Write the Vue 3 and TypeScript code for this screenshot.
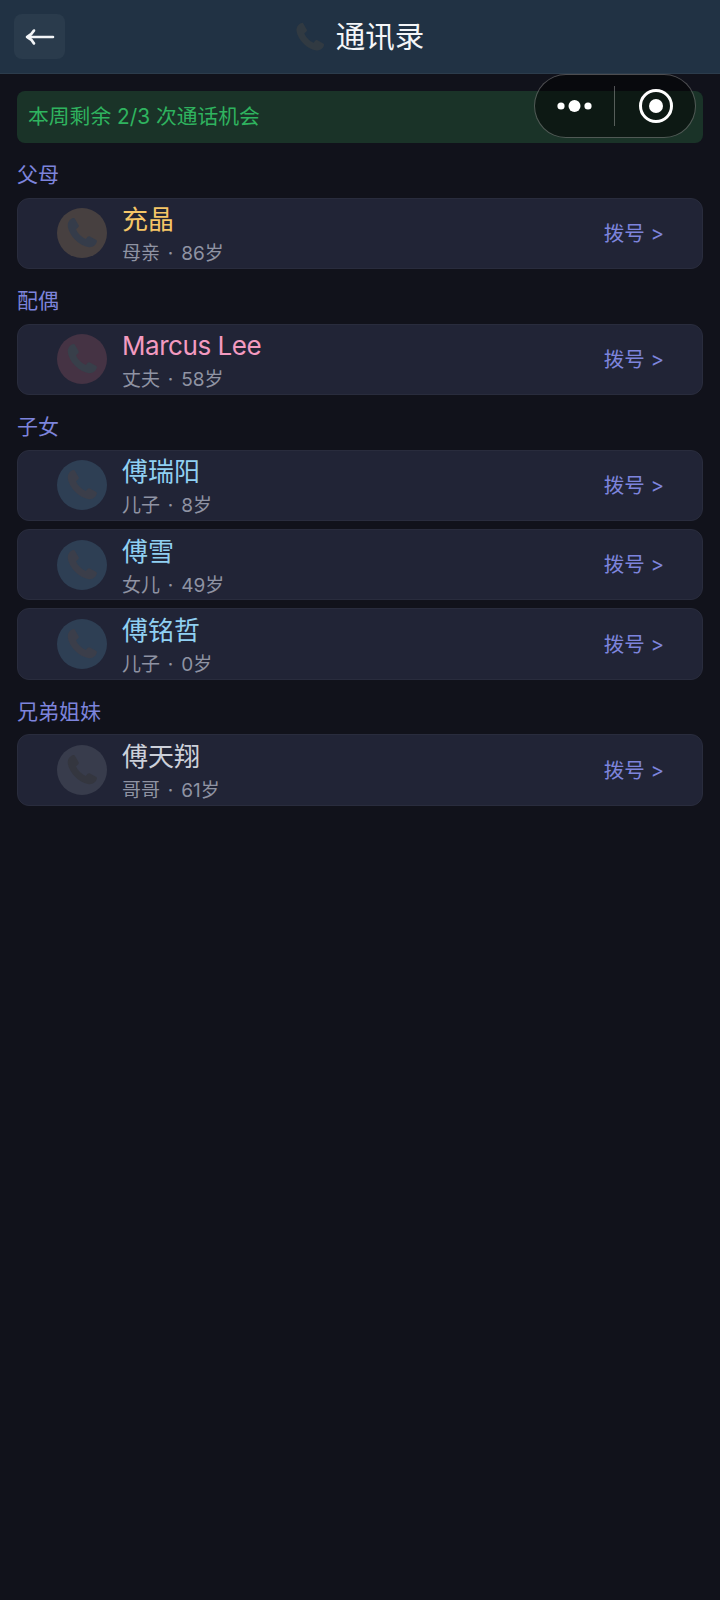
<script setup lang="ts">
interface Contact { name: string; sub: string; tone: string }
interface Group { title: string; items: Contact[] }
const groups: Group[] = [
  { title: '父母', items: [{ name: '充晶', sub: '母亲 · 86岁', tone: 'gold' }] },
  { title: '配偶', items: [{ name: 'Marcus Lee', sub: '丈夫 · 58岁', tone: 'pink' }] },
  { title: '子女', items: [
    { name: '傅瑞阳', sub: '儿子 · 8岁', tone: 'blue' },
    { name: '傅雪', sub: '女儿 · 49岁', tone: 'blue' },
    { name: '傅铭哲', sub: '儿子 · 0岁', tone: 'blue' },
  ] },
  { title: '兄弟姐妹', items: [{ name: '傅天翔', sub: '哥哥 · 61岁', tone: 'grey' }] },
]
const phone = 'M6.6 2.6 C4.4 3 2.8 5.2 3 7.8 C3.8 13.8 10.2 20.2 16.4 21 C19 21.2 21 19.4 21.4 17.4 C21.5 16.9 21.2 16.5 20.8 16.3 L17 14.2 C16.5 13.9 16 14 15.6 14.4 L14.4 15.8 C11.6 14.6 9.4 12.4 8.2 9.6 L9.6 8.4 C10 8 10.1 7.5 9.8 7 L7.6 3.1 C7.4 2.7 7 2.5 6.6 2.6 Z'
</script>

<template>
  <div class="page">
    <header class="top">
      <button class="back" type="button" aria-label="返回">
        <svg width="30" height="20" viewBox="0 0 30 20" fill="none" stroke="#f2f4f7" stroke-width="2.6" stroke-linecap="round" stroke-linejoin="round">
          <path d="M2 10 H28 M9 3.5 C7.5 6.2 5 8.6 2 10 C5 11.4 7.5 13.8 9 16.5" />
        </svg>
      </button>
      <h1 class="title">
        <svg class="title-icon" width="36" height="36" viewBox="0 0 24 24"><path :d="phone" /></svg>
        <span>通讯录</span>
      </h1>
    </header>

    <main class="body">
      <div class="banner">本周剩余 2/3 次通话机会</div>
      <section v-for="g in groups" :key="g.title" class="group">
        <h2 class="label">{{ g.title }}</h2>
        <div class="list">
          <article v-for="c in g.items" :key="c.name" class="card">
            <div class="avatar" :class="c.tone">
              <svg width="38" height="38" viewBox="0 0 24 24"><path :d="phone" /></svg>
            </div>
            <div class="info">
              <div class="name" :class="c.tone">{{ c.name }}</div>
              <div class="sub">{{ c.sub }}</div>
            </div>
            <div class="dial">拨号 &gt;</div>
          </article>
        </div>
      </section>
    </main>

    <div class="capsule">
      <svg class="dots" width="44" height="14" viewBox="0 0 44 14" fill="#fff">
        <circle cx="4" cy="7" r="3.6" /><circle cx="17.5" cy="7" r="6" /><circle cx="31" cy="7" r="3.6" />
      </svg>
      <span class="sep"></span>
      <svg class="target" width="36" height="36" viewBox="0 0 36 36">
        <circle cx="18" cy="18" r="15.5" fill="none" stroke="#fff" stroke-width="3" />
        <circle cx="18" cy="18" r="7" fill="#fff" />
      </svg>
    </div>
  </div>
</template>

<style>
html, body { margin: 0; background: #11121b; }
</style>

<style scoped>
.page {
  position: relative;
  width: 720px;
  min-height: 1600px;
  background: #11121b;
  font-family: Inter, "Noto Sans CJK SC", "Noto Sans", sans-serif;
}
.top {
  position: relative;
  height: 73px;
  display: flex;
  align-items: center;
  justify-content: center;
  background: #213244;
  border-bottom: 1px solid #2c3c4c;
}
.back {
  position: absolute;
  left: 14px;
  top: 14px;
  width: 51px;
  height: 45px;
  padding: 0;
  border: 0;
  border-radius: 8px;
  background: #2a3b4c;
  display: flex;
  align-items: center;
  justify-content: center;
}
.title {
  margin: 0 0 0 -4px;
  display: flex;
  align-items: center;
  gap: 8px;
  font-size: 29.5px;
  font-weight: 400;
  line-height: 40px;
  color: #f4f6f8;
}
.title-icon path { fill: #313a42; }
.title span { margin-top: -1px; }
.body { padding: 17px 17px 0; }
.banner {
  height: 52px;
  box-sizing: border-box;
  padding: 0 11px 5px;
  display: flex;
  align-items: center;
  border-radius: 8px;
  background: #1a3328;
  color: #2fb35f;
  font-size: 20.8px;
}
.group { margin-top: 18px; }
.label {
  margin: 0 0 8.6px;
  font-size: 21px;
  line-height: 28px;
  font-weight: 400;
  color: #7d84dc;
}
.list { display: flex; flex-direction: column; gap: 8px; }
.card {
  height: 71.4px;
  box-sizing: border-box;
  padding: 0 38px 0 39px;
  display: flex;
  align-items: center;
  gap: 15px;
  border-radius: 12px;
  background: #212436;
  border: 1px solid #292c3d;
}
.avatar {
  width: 50px;
  height: 50px;
  flex: none;
  border-radius: 50%;
  display: flex;
  align-items: center;
  justify-content: center;
}
.avatar.gold { background: #474040; }
.avatar.gold path { fill: #353c4a; }
.avatar.pink { background: #453344; }
.avatar.pink path { fill: #383f4a; }
.avatar.blue { background: #2e3f54; }
.avatar.blue path { fill: #3b3e4a; }
.avatar.grey { background: #383c4c; }
.avatar.grey path { fill: #34363f; }
.info { flex: 1; min-width: 0; }
.name { font-size: 26px; line-height: 32px; margin-top: -3px; }
.name.gold { color: #f6c667; }
.name.pink { color: #f39ac0; letter-spacing: -0.45px; }
.name.blue { color: #90d0f2; }
.name.grey { color: #ccd0da; }
.sub { font-size: 19px; line-height: 26px; margin-top: 5px; margin-bottom: -8px; word-spacing: 2.5px; color: #8f93a3; }
.dial { font-size: 20.5px; color: #7d84dc; padding-bottom: 3px; }
.capsule {
  position: absolute;
  left: 534px;
  top: 74px;
  width: 162px;
  height: 64px;
  box-sizing: border-box;
  border: 1.5px solid rgba(255, 255, 255, 0.28);
  border-radius: 32px;
  background: rgba(0, 0, 0, 0.5);
  display: flex;
  align-items: center;
}
.dots { margin-left: 21.5px; }
.sep { width: 1px; height: 40px; margin-left: 13px; background: rgba(255, 255, 255, 0.3); }
.target { margin-left: 23px; }
</style>
